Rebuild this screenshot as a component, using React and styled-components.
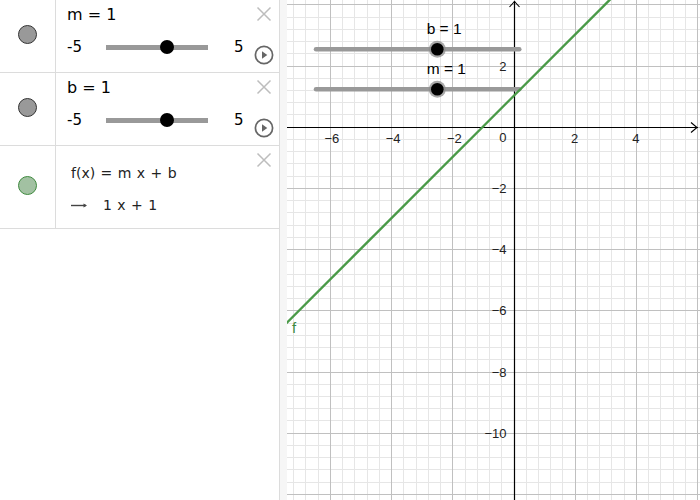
import React from 'react';
import styled, { createGlobalStyle } from 'styled-components';

const GlobalStyle = createGlobalStyle`
  html, body {
    margin: 0;
    padding: 0;
    background: #ffffff;
    overflow: hidden;
  }
`;

// graph geometry (px)
const GW = 413;
const GH = 500;
const OX = 226.5;
const OY = 126.7;
const S = 30.6;

const px = (x) => OX + x * S;
const py = (y) => OY - y * S;
const crisp = (v) => Math.round(v) + 0.5;

const sliders = [
  { name: 'm', value: 1, min: -5, max: 5, color: 'gray' },
  { name: 'b', value: 1, min: -5, max: 5, color: 'gray' },
];

function App() {
  return (
    <>
      <GlobalStyle />
      <Page>
        <AlgebraPanel>
          {sliders.map((s) => (
            <Row key={s.name} $h={73}>
              <MarkerCell>
                <Marker $kind={s.color} />
              </MarkerCell>
              <Body $pl={11}>
                <Title>
                  {s.name} = {s.value}
                </Title>
                <SliderLine>
                  <Bound $w={39}>{s.min}</Bound>
                  <Track>
                    <Thumb
                      style={{ left: `${((s.value - s.min) / (s.max - s.min)) * 100}%` }}
                    />
                  </Track>
                  <Bound $w={20} $ml={26}>
                    {s.max}
                  </Bound>
                </SliderLine>
              </Body>
              <Actions>
                <CloseIcon />
                <PlayIcon />
              </Actions>
            </Row>
          ))}
          <Row $h={83}>
            <MarkerCell>
              <Marker $kind="green" />
            </MarkerCell>
            <Body $pl={15}>
              <Formula $mt={17}>f(x) = m x + b</Formula>
              <ResultLine>
                <ArrowIcon />
                <Formula>1 x + 1</Formula>
              </ResultLine>
            </Body>
            <Actions>
              <CloseIcon />
            </Actions>
          </Row>
        </AlgebraPanel>
        <Splitter />
        <GraphView>
          <Graph />
        </GraphView>
      </Page>
    </>
  );
}

export default App;

function CloseIcon() {
  return (
    <IconSvg width="16" height="16" viewBox="0 0 16 16">
      <path d="M1.5 1.5 L14.5 14.5 M14.5 1.5 L1.5 14.5" stroke="#bdbdbd" strokeWidth="1.5" fill="none" />
    </IconSvg>
  );
}

function PlayIcon() {
  return (
    <IconSvg width="20" height="20" viewBox="0 0 20 20" $mt={23}>
      <circle cx="10" cy="10" r="8.6" stroke="#666" strokeWidth="1.7" fill="none" />
      <path d="M8 6.3 L13.3 10 L8 13.7 Z" fill="#666" />
    </IconSvg>
  );
}

function ArrowIcon() {
  return (
    <IconSvg width="32" height="10" viewBox="0 0 32 10">
      <path d="M0 5.5 H15" stroke="#444" strokeWidth="1.4" />
      <path d="M12.5 3.5 L16 5.5 L12.5 7.5 Z" fill="#444" />
    </IconSvg>
  );
}

function Graph() {
  const vLines = [];
  for (let k = -25; k <= 20; k++) {
    const x = px(k * 0.4);
    if (x < 0 || x > GW) continue;
    vLines.push({ x: crisp(x), major: k % 5 === 0 });
  }
  const hLines = [];
  for (let k = -35; k <= 15; k++) {
    const y = py(k * 0.4);
    if (y < 0 || y > GH) continue;
    hLines.push({ y: crisp(y), major: k % 5 === 0 });
  }

  const xLabels = [-6, -4, -2, 2, 4];
  const yLabels = [2, -2, -4, -6, -8, -10];

  const fx0 = -7.7;
  const fx1 = 4.5;

  const graphSliders = [
    { label: 'b = 1', y: 49.3 },
    { label: 'm = 1', y: 89.3 },
  ];

  return (
    <svg width={GW} height={GH} viewBox={`0 0 ${GW} ${GH}`}>
      {vLines.filter((l) => !l.major).map((l) => (
        <line key={`vm${l.x}`} x1={l.x} x2={l.x} y1={0} y2={GH} stroke="#e6e6e6" strokeWidth="1" />
      ))}
      {hLines.filter((l) => !l.major).map((l) => (
        <line key={`hm${l.y}`} x1={0} x2={GW} y1={l.y} y2={l.y} stroke="#e6e6e6" strokeWidth="1" />
      ))}
      {vLines.filter((l) => l.major).map((l) => (
        <line key={`vM${l.x}`} x1={l.x} x2={l.x} y1={0} y2={GH} stroke="#c0c0c0" strokeWidth="1" />
      ))}
      {hLines.filter((l) => l.major).map((l) => (
        <line key={`hM${l.y}`} x1={0} x2={GW} y1={l.y} y2={l.y} stroke="#c0c0c0" strokeWidth="1" />
      ))}

      {/* axes */}
      <line x1={0} x2={GW - 2} y1={crisp(OY)} y2={crisp(OY)} stroke="#000" strokeWidth="1.2" />
      <line x1={crisp(OX)} x2={crisp(OX)} y1={1} y2={GH} stroke="#000" strokeWidth="1.2" />
      <path
        d={`M${GW - 9} ${crisp(OY) - 5} L${GW - 3} ${crisp(OY)} L${GW - 9} ${crisp(OY) + 5}`}
        stroke="#000"
        strokeWidth="1.1"
        fill="none"
      />
      <path
        d={`M${crisp(OX) - 5} 7 L${crisp(OX)} 1.5 L${crisp(OX) + 5} 7`}
        stroke="#000"
        strokeWidth="1.1"
        fill="none"
      />

      {xLabels.map((v) => (
        <AxisText key={`x${v}`} x={px(v) + (v < 0 ? 2 : 0)} y={OY + 16.5} textAnchor="middle">
          {v < 0 ? `\u2212${-v}` : v}
        </AxisText>
      ))}
      <AxisText x={OX - 7} y={OY + 15.5} textAnchor="end">
        0
      </AxisText>
      {yLabels.map((v) => (
        <AxisText key={`y${v}`} x={OX - 7} y={py(v) + 5} textAnchor="end">
          {v < 0 ? `\u2212${-v}` : v}
        </AxisText>
      ))}

      {/* sliders placed on the canvas */}
      {graphSliders.map((s) => (
        <g key={s.label}>
          <line x1={29} x2={232.3} y1={s.y} y2={s.y} stroke="#999" strokeWidth="4.5" strokeLinecap="round" />
          <circle cx={150.3} cy={s.y} r={8.5} fill="#8c8c8c" opacity="0.75" />
          <circle cx={150.3} cy={s.y} r={6.3} fill="#000" />
          <CanvasLabel x={139.7} y={s.y - 15.3}>
            {s.label}
          </CanvasLabel>
        </g>
      ))}

      {/* f(x) = x + 1 */}
      <line
        x1={px(fx0)}
        y1={py(fx0 + 1)}
        x2={px(fx1)}
        y2={py(fx1 + 1)}
        stroke="#4a9a48"
        strokeWidth="2.4"
      />
      <FnLabel x={5} y={333}>
        f
      </FnLabel>
    </svg>
  );
}

const Page = styled.div`
  display: flex;
  width: 700px;
  height: 500px;
  overflow: hidden;
`;

const AlgebraPanel = styled.div`
  width: 279px;
  flex-shrink: 0;
  border-right: 1px solid #dcdcdc;
  background: #fff;
`;

const Splitter = styled.div`
  width: 7px;
  flex-shrink: 0;
  background: #f6f6f6;
`;

const GraphView = styled.div`
  flex: 1;
  background: #fff;
  overflow: hidden;

  svg {
    display: block;
  }
`;

const Row = styled.div`
  display: flex;
  height: ${({ $h }) => $h}px;
  box-sizing: border-box;
  border-bottom: 1px solid #dcdcdc;
`;

const MarkerCell = styled.div`
  width: 56px;
  flex-shrink: 0;
  display: flex;
  align-items: center;
  justify-content: center;
  padding-bottom: 4px;
  box-sizing: border-box;
  border-right: 1px solid #dcdcdc;
`;

const Marker = styled.div`
  width: 19px;
  height: 19px;
  border-radius: 50%;
  box-sizing: border-box;
  background: ${({ $kind }) => ($kind === 'green' ? '#a2c1a2' : '#999999')};
  border: 1px solid ${({ $kind }) => ($kind === 'green' ? '#3f8a3f' : '#333333')};
`;

const Body = styled.div`
  flex: 1;
  padding-left: ${({ $pl }) => $pl}px;
  font-family: 'DejaVu Sans', 'Liberation Sans', sans-serif;
  color: #000;
`;

const Title = styled.div`
  margin-top: 5px;
  height: 20px;
  line-height: 20px;
  font-size: 16px;
`;

const SliderLine = styled.div`
  display: flex;
  align-items: center;
  margin-top: 12px;
  height: 20px;
`;

const Bound = styled.span`
  width: ${({ $w }) => $w}px;
  margin-left: ${({ $ml }) => $ml || 0}px;
  font-size: 15px;
  line-height: 20px;
`;

const Track = styled.div`
  position: relative;
  width: 102px;
  height: 5px;
  background: #999;
`;

const Thumb = styled.div`
  position: absolute;
  top: 50%;
  width: 14px;
  height: 14px;
  border-radius: 50%;
  background: #000;
  transform: translate(-50%, -50%);
`;

const Formula = styled.div`
  margin-top: ${({ $mt }) => $mt || 0}px;
  height: 20px;
  line-height: 20px;
  font-size: 14px;
  color: #222;
  word-spacing: 1px;
`;

const ResultLine = styled.div`
  display: flex;
  align-items: center;
  margin-top: 12px;
`;

const Actions = styled.div`
  width: 20px;
  margin-right: 5px;
  display: flex;
  flex-direction: column;
  align-items: center;
  padding-top: 6px;
`;

const IconSvg = styled.svg`
  display: block;
  flex-shrink: 0;
  margin-top: ${({ $mt }) => $mt || 0}px;
`;

const AxisText = styled.text`
  font-family: 'Liberation Sans', Arial, sans-serif;
  font-size: 13px;
  fill: #222;
`;

const CanvasLabel = styled.text`
  font-family: 'Liberation Sans', Arial, sans-serif;
  font-size: 15.5px;
  fill: #000;
`;

const FnLabel = styled.text`
  font-family: 'Liberation Sans', Arial, sans-serif;
  font-size: 15px;
  fill: #3f8a3f;
`;
